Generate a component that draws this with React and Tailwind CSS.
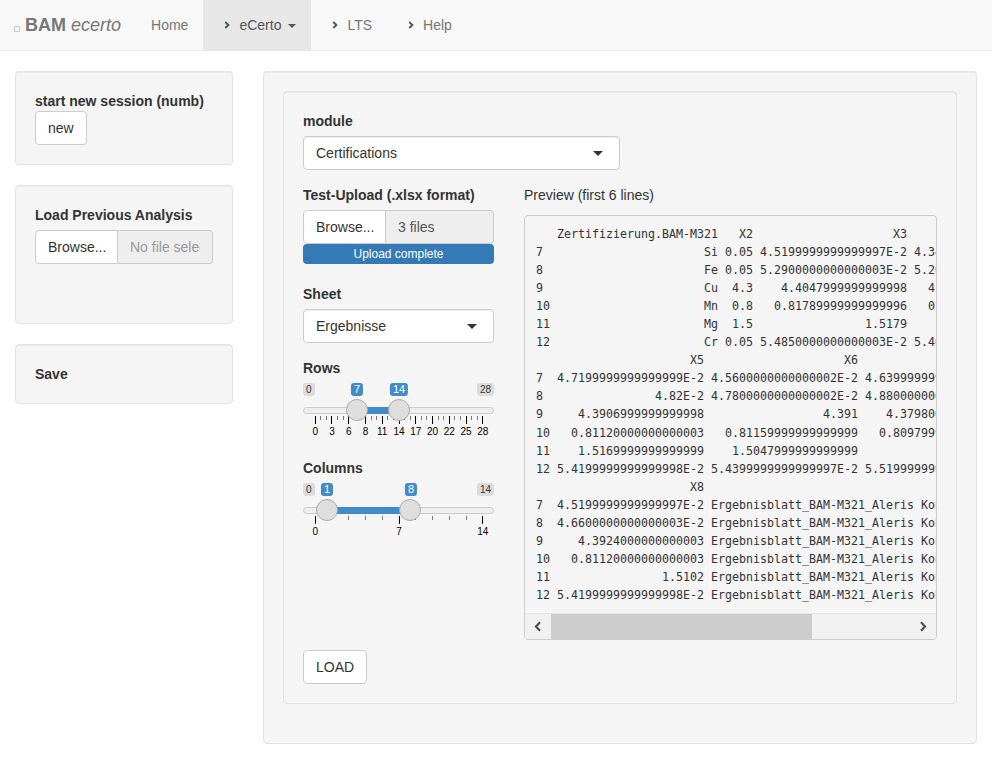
import React from "react";

const navItems = [
  { label: "Home", icon: false },
  { label: "eCerto", icon: true, active: true, caret: true },
  { label: "LTS", icon: true },
  { label: "Help", icon: true },
];

const pad = (s, n) => String(s).padStart(n, " ");

const block1 = [
  "   Zertifizierung.BAM-M321   X2" + pad("X3", 22) + pad("X4", 22),
  "7  " + pad("Si", 23) + " 0.05 4.5199999999999997E-2 4.3400000000000001E-2",
  "8  " + pad("Fe", 23) + " 0.05 5.2900000000000003E-2 5.2600000000000001E-2",
  "9  " + pad("Cu", 23) + "  4.3 " + pad("4.4047999999999998", 21) + " " + pad("4.37980000000000003", 21),
  "10 " + pad("Mn", 23) + "  0.8 " + pad("0.81789999999999996", 21) + " " + pad("0.80979999999999996", 21),
  "11 " + pad("Mg", 23) + "  1.5 " + pad("1.5179", 21) + " " + pad("1.5129999999999999", 21),
  "12 " + pad("Cr", 23) + " 0.05 5.4850000000000003E-2 5.4600000000000003E-2",
];

const block2 = [
  "   " + pad("X5", 21) + pad("X6", 22) + pad("X7", 22),
  "7  4.7199999999999999E-2 4.5600000000000002E-2 4.6399999999999997E-2",
  "8  " + pad("4.82E-2", 21) + " 4.7800000000000002E-2 4.8800000000000003E-2",
  "9  " + pad("4.3906999999999998", 21) + " " + pad("4.391", 21) + " " + pad("4.3798000000000004", 21),
  "10 " + pad("0.81120000000000003", 21) + " " + pad("0.81159999999999999", 21) + " " + pad("0.80979999999999996", 21),
  "11 " + pad("1.5169999999999999", 21) + " " + pad("1.5047999999999999", 21) + " " + pad("1.5085", 21),
  "12 5.4199999999999998E-2 5.4399999999999997E-2 5.5199999999999999E-2",
];

const fileName = "Ergebnisblatt_BAM-M321_Aleris Koblenz.xlsx";
const block3 = [
  "   " + pad("X8", 21) + pad("X9", fileName.length + 1),
  "7  4.5199999999999997E-2 " + fileName,
  "8  4.6600000000000003E-2 " + fileName,
  "9  " + pad("4.3924000000000003", 21) + " " + fileName,
  "10 " + pad("0.81120000000000003", 21) + " " + fileName,
  "11 " + pad("1.5102", 21) + " " + fileName,
  "12 5.4199999999999998E-2 " + fileName,
];

const preview = [...block1, ...block2, ...block3].join("\n");

function Chevron() {
  return (
    <svg width="6" height="8" viewBox="0 0 6 8" className="ml-[6px] mr-[9px]">
      <path d="M1.3 1 L4.4 4 L1.3 7" fill="none" stroke="#555" strokeWidth="1.9" />
    </svg>
  );
}

function Well({ children, className = "" }) {
  return (
    <div className={"mb-[20px] rounded-[4px] border border-[#e3e3e3] bg-[#f5f5f5] p-[19px] shadow-[inset_0_1px_1px_rgba(0,0,0,0.05)] " + className}>
      {children}
    </div>
  );
}

function Label({ children }) {
  return <div className="text-[14px] font-bold leading-[20px] text-[#333]">{children}</div>;
}

function Button({ children }) {
  return (
    <button className="h-[34px] rounded-[4px] border border-[#ccc] bg-white px-[12px] text-[14px] leading-[20px] text-[#333]">
      {children}
    </button>
  );
}

function FileInput({ value, placeholder }) {
  return (
    <div className="flex h-[34px] text-[14px] leading-[20px]">
      <div className="flex w-[83px] shrink-0 items-center rounded-l-[4px] border border-[#ccc] bg-white px-[12px] text-[#333]">
        Browse...
      </div>
      <div className="flex min-w-0 flex-1 items-center rounded-r-[4px] border border-l-0 border-[#ccc] bg-[#eee] px-[12px]">
        <div className={"min-w-0 flex-1 overflow-hidden whitespace-nowrap " + (placeholder ? "text-[#999]" : "text-[#555]")}>
          {value}
        </div>
      </div>
    </div>
  );
}

function Select({ value, className = "" }) {
  return (
    <div
      className={
        "flex h-[34px] items-center justify-between rounded-[4px] border border-[#ccc] bg-white pl-[12px] pr-[16px] text-[14px] text-[#333] shadow-[inset_0_1px_1px_rgba(0,0,0,0.075)] " +
        className
      }
    >
      <span>{value}</span>
      <span className="h-0 w-0 border-x-[5px] border-t-[5px] border-x-transparent border-t-[#333]" />
    </div>
  );
}

function RangeSlider({ min, max, from, to, labels, small }) {
  const x = (v) => 11.7 + ((v - min) / (max - min)) * 167.6;
  const gx = (f) => 11.7 + f * 167.6;
  const n = labels.length - 1;
  const smallTicks = [];
  for (let i = 0; i < n; i++) {
    for (let s = 1; s <= small; s++) smallTicks.push((i + s / (small + 1)) / n);
  }
  return (
    <div className="relative h-[60px] w-full" style={{ fontFamily: "Arial, 'Liberation Sans', sans-serif" }}>
      <div className="absolute top-0 left-0 rounded-[3px] bg-black/10 px-[3px] text-[10px] leading-[13px] text-[#333]">{min}</div>
      <div className="absolute top-0 right-0 rounded-[3px] bg-black/10 px-[3px] text-[10px] leading-[13px] text-[#333]">{max}</div>
      <div className="absolute top-[24px] left-0 right-0 h-[7px] rounded-full border border-[#ccc] bg-[#eee]" />
      <div className="absolute top-[24px] h-[7px] bg-[#428bca]" style={{ left: x(from), width: x(to) - x(from) }} />
      {smallTicks.map((f) => (
        <div key={"s" + f} className="absolute top-[33px] h-[4px] w-px bg-[#777]" style={{ left: gx(f) }} />
      ))}
      {labels.map((l, i) => (
        <React.Fragment key={l}>
          <div className="absolute top-[33px] h-[8px] w-px bg-black" style={{ left: gx(i / n) }} />
          <div
            className="absolute top-[43px] -translate-x-1/2 text-[10px] leading-[12px] text-black"
            style={{ left: gx(i / n) + 0.5 }}
          >
            {l}
          </div>
        </React.Fragment>
      ))}
      {[from, to].map((v) => (
        <React.Fragment key={v}>
          <div
            className="absolute top-[16px] h-[22px] w-[22px] rounded-full border border-[#ababab] bg-[#dedede]"
            style={{ left: x(v) - 11 }}
          />
          <div
            className="absolute top-0 -translate-x-1/2 rounded-[3px] bg-[#428bca] px-[3px] text-[11px] leading-[13px] text-white"
            style={{ left: x(v) + 0.5 }}
          >
            {v}
          </div>
        </React.Fragment>
      ))}
    </div>
  );
}

function ScrollArrow({ dir }) {
  return (
    <svg width="8" height="11" viewBox="0 0 8 11">
      <path
        d={dir === "left" ? "M6 1.2 L2 5.5 L6 9.8" : "M2 1.2 L6 5.5 L2 9.8"}
        fill="none"
        stroke="#505050"
        strokeWidth="2.2"
      />
    </svg>
  );
}

export default function App() {
  return (
    <div className="min-h-screen bg-white text-[#333]" style={{ fontFamily: "'Liberation Sans', Arial, sans-serif" }}>
      <header className="flex h-[51px] items-stretch border-b border-[#e7e7e7] bg-[#f8f8f8]">
        <div className="flex items-center pl-[14px] pr-[15px] text-[18px] text-[#777]">
          <span className="mt-[8px] mr-[5px] h-[6px] w-[6px] rounded-[1px] border border-[#c8c8c8]" />
          <span className="font-bold">BAM</span>
          <span className="ml-[5px] italic">ecerto</span>
        </div>
        <nav className="flex items-stretch">
          {navItems.map((item) => (
            <div
              key={item.label}
              className={
                "flex items-center px-[15px] text-[14px] " +
                (item.active ? "bg-[#e7e7e7] text-[#555]" : "text-[#777]")
              }
            >
              {item.icon && <Chevron />}
              {item.label}
              {item.caret && (
                <span className="ml-[7px] mt-[2px] h-0 w-0 border-x-[4px] border-t-[4px] border-x-transparent border-t-[#555]" />
              )}
            </div>
          ))}
        </nav>
      </header>

      <main className="flex pt-[20px]">
        <aside className="w-[248px] shrink-0 px-[15px]">
          <Well>
            <Label>start new session (numb)</Label>
            <Button>new</Button>
          </Well>
          <Well>
            <Label>Load Previous Analysis</Label>
            <div className="mt-[5px] mb-[40px]">
              <FileInput value="No file selected" placeholder />
            </div>
          </Well>
          <Well>
            <Label>Save</Label>
          </Well>
        </aside>

        <section className="min-w-0 flex-1 px-[15px]">
          <Well>
            <Well className="mb-[20px]">
              <Label>module</Label>
              <Select value="Certifications" className="mt-[5px] w-[317px]" />

              <div className="mt-[15px] flex gap-[30px]">
                <div className="w-[191px] shrink-0">
                  <Label>Test-Upload (.xlsx format)</Label>
                  <div className="mt-[5px]">
                    <FileInput value="3 files" />
                  </div>
                  <div className="mb-[20px] h-[20px] rounded-[4px] bg-[#337ab7] text-center text-[12px] leading-[20px] text-white">
                    Upload complete
                  </div>

                  <Label>Sheet</Label>
                  <Select value="Ergebnisse" className="mt-[5px] mb-[15px]" />

                  <Label>Rows</Label>
                  <div className="mt-[5px] mb-[15px]">
                    <RangeSlider
                      min={0}
                      max={28}
                      from={7}
                      to={14}
                      labels={[0, 3, 6, 8, 11, 14, 17, 20, 22, 25, 28]}
                      small={2}
                    />
                  </div>

                  <Label>Columns</Label>
                  <div className="mt-[5px] mb-[15px]">
                    <RangeSlider min={0} max={14} from={1} to={8} labels={[0, 7, 14]} small={4} />
                  </div>
                </div>

                <div className="min-w-0 flex-1">
                  <div className="text-[14px] leading-[20px] text-[#333]">Preview (first 6 lines)</div>
                  <div className="mt-[10px] mb-[10px] overflow-hidden rounded-[4px] border border-[#ccc] bg-[#f5f5f5]">
                    <pre
                      className="overflow-hidden whitespace-pre pt-[8.5px] pb-[9px] pl-[11px] text-[11.63px] leading-[18.1px] text-[#333]"
                      style={{ fontFamily: "'DejaVu Sans Mono', 'Liberation Mono', monospace" }}
                    >
                      {preview}
                    </pre>
                    <div className="flex h-[26px] items-stretch border-t border-[#e6e6e6] bg-[#f1f1f1]">
                      <div className="flex w-[26px] items-center justify-center">
                        <ScrollArrow dir="left" />
                      </div>
                      <div className="flex flex-1 items-stretch">
                        <div className="w-[261px] bg-[#cdcdcd]" />
                      </div>
                      <div className="flex w-[26px] items-center justify-center">
                        <ScrollArrow dir="right" />
                      </div>
                    </div>
                  </div>
                </div>
              </div>

              <Button>LOAD</Button>
            </Well>
          </Well>
        </section>
      </main>
    </div>
  );
}
